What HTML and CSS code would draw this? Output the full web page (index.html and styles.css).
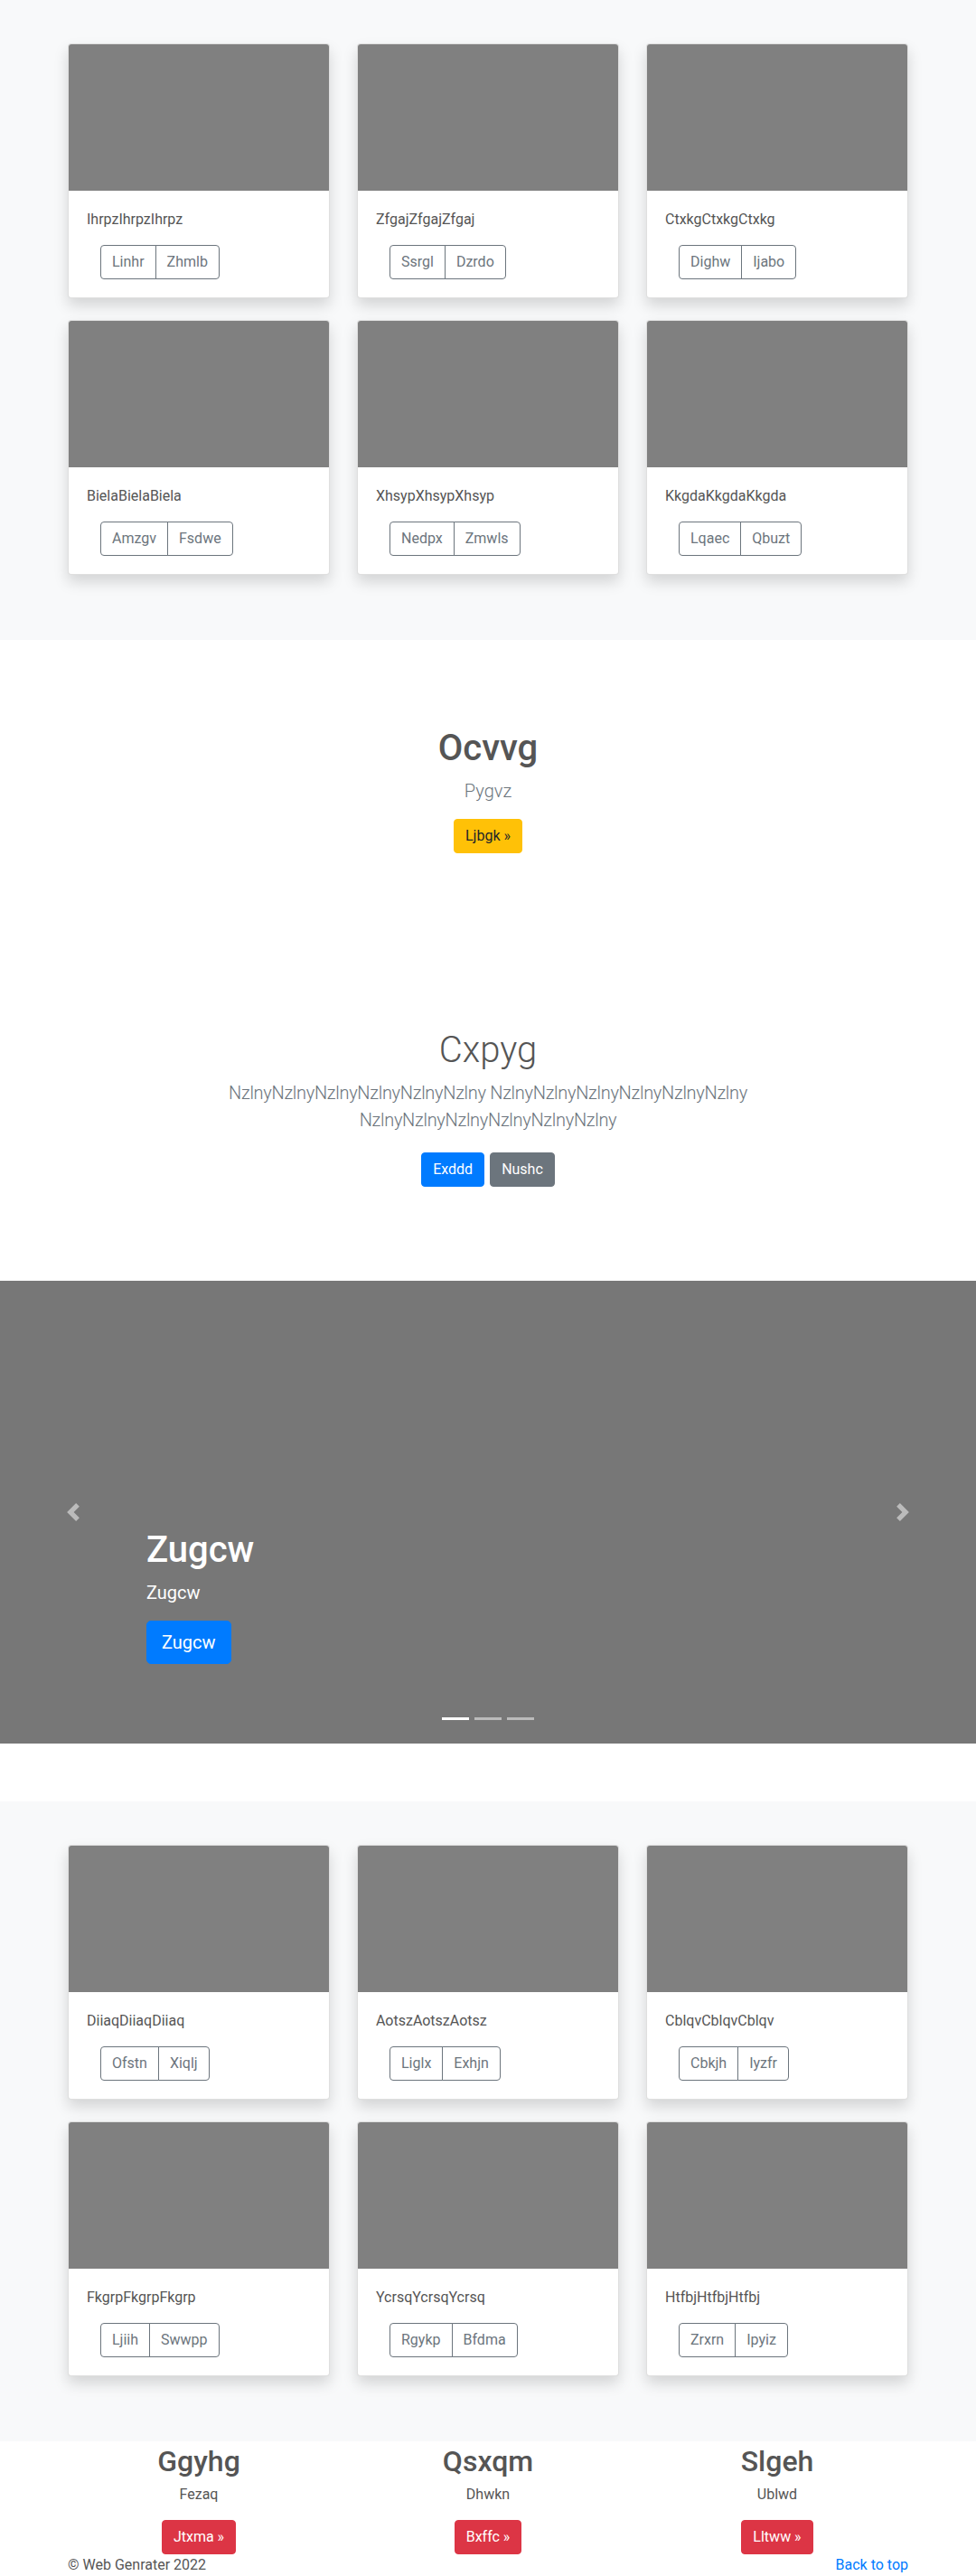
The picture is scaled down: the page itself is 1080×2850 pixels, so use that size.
FILE: index.html
```html
<!DOCTYPE html>
<html lang="en">
<head>
<meta charset="utf-8">
<title>Web Genrater</title>
<link rel="stylesheet" href="styles.css">
</head>
<body>
<main>
  <section class="album">
    <div class="container">
      <div class="card-grid">
        <div class="card"><div class="card-img"></div><div class="card-body"><p class="card-text">IhrpzIhrpzIhrpz</p><div class="btn-group"><a class="btn btn-outline" href="#">Linhr</a><a class="btn btn-outline" href="#">Zhmlb</a></div></div></div>
        <div class="card"><div class="card-img"></div><div class="card-body"><p class="card-text">ZfgajZfgajZfgaj</p><div class="btn-group"><a class="btn btn-outline" href="#">Ssrgl</a><a class="btn btn-outline" href="#">Dzrdo</a></div></div></div>
        <div class="card"><div class="card-img"></div><div class="card-body"><p class="card-text">CtxkgCtxkgCtxkg</p><div class="btn-group"><a class="btn btn-outline" href="#">Dighw</a><a class="btn btn-outline" href="#">Ijabo</a></div></div></div>
        <div class="card"><div class="card-img"></div><div class="card-body"><p class="card-text">BielaBielaBiela</p><div class="btn-group"><a class="btn btn-outline" href="#">Amzgv</a><a class="btn btn-outline" href="#">Fsdwe</a></div></div></div>
        <div class="card"><div class="card-img"></div><div class="card-body"><p class="card-text">XhsypXhsypXhsyp</p><div class="btn-group"><a class="btn btn-outline" href="#">Nedpx</a><a class="btn btn-outline" href="#">Zmwls</a></div></div></div>
        <div class="card"><div class="card-img"></div><div class="card-body"><p class="card-text">KkgdaKkgdaKkgda</p><div class="btn-group"><a class="btn btn-outline" href="#">Lqaec</a><a class="btn btn-outline" href="#">Qbuzt</a></div></div></div>
      </div>
    </div>
  </section>

  <section class="hero hero-a">
    <div class="container">
      <h1 class="hero-title">Ocvvg</h1>
      <p class="lead">Pygvz</p>
      <div class="btn-row"><a class="btn btn-warning" href="#">Ljbgk »</a></div>
    </div>
  </section>

  <section class="hero hero-b">
    <div class="container">
      <h1 class="hero-title light">Cxpyg</h1>
      <p class="lead lead-wide">NzlnyNzlnyNzlnyNzlnyNzlnyNzlny NzlnyNzlnyNzlnyNzlnyNzlnyNzlny NzlnyNzlnyNzlnyNzlnyNzlnyNzlny</p>
      <div class="btn-row btn-pair"><a class="btn btn-primary" href="#">Exddd</a><a class="btn btn-secondary" href="#">Nushc</a></div>
    </div>
  </section>

  <div class="carousel">
    <ol class="carousel-indicators">
      <li class="active"></li>
      <li></li>
      <li></li>
    </ol>
    <div class="carousel-caption">
      <h1 class="caption-title">Zugcw</h1>
      <p class="caption-text">Zugcw</p>
      <p class="caption-action"><a class="btn btn-lg btn-primary" href="#">Zugcw</a></p>
    </div>
    <a class="carousel-control prev" href="#" aria-label="Previous">
      <svg width="20" height="20" viewBox="0 0 8 8" fill="#fff"><path d="M5.25 0l-4 4 4 4 1.5-1.5L4.25 4l2.5-2.5L5.25 0z"/></svg>
    </a>
    <a class="carousel-control next" href="#" aria-label="Next">
      <svg width="20" height="20" viewBox="0 0 8 8" fill="#fff"><path d="M2.75 0l-1.5 1.5L3.75 4l-2.5 2.5L2.75 8l4-4-4-4z"/></svg>
    </a>
  </div>

  <section class="album">
    <div class="container">
      <div class="card-grid">
        <div class="card"><div class="card-img"></div><div class="card-body"><p class="card-text">DiiaqDiiaqDiiaq</p><div class="btn-group"><a class="btn btn-outline" href="#">Ofstn</a><a class="btn btn-outline" href="#">Xiqlj</a></div></div></div>
        <div class="card"><div class="card-img"></div><div class="card-body"><p class="card-text">AotszAotszAotsz</p><div class="btn-group"><a class="btn btn-outline" href="#">Liglx</a><a class="btn btn-outline" href="#">Exhjn</a></div></div></div>
        <div class="card"><div class="card-img"></div><div class="card-body"><p class="card-text">CblqvCblqvCblqv</p><div class="btn-group"><a class="btn btn-outline" href="#">Cbkjh</a><a class="btn btn-outline" href="#">Iyzfr</a></div></div></div>
        <div class="card"><div class="card-img"></div><div class="card-body"><p class="card-text">FkgrpFkgrpFkgrp</p><div class="btn-group"><a class="btn btn-outline" href="#">Ljiih</a><a class="btn btn-outline" href="#">Swwpp</a></div></div></div>
        <div class="card"><div class="card-img"></div><div class="card-body"><p class="card-text">YcrsqYcrsqYcrsq</p><div class="btn-group"><a class="btn btn-outline" href="#">Rgykp</a><a class="btn btn-outline" href="#">Bfdma</a></div></div></div>
        <div class="card"><div class="card-img"></div><div class="card-body"><p class="card-text">HtfbjHtfbjHtfbj</p><div class="btn-group"><a class="btn btn-outline" href="#">Zrxrn</a><a class="btn btn-outline" href="#">Ipyiz</a></div></div></div>
      </div>
    </div>
  </section>

  <section class="marketing">
    <div class="container marketing-grid">
      <div class="feature">
        <h2 class="feature-title">Ggyhg</h2>
        <p class="feature-text">Fezaq</p>
        <p class="feature-action"><a class="btn btn-danger" href="#">Jtxma »</a></p>
      </div>
      <div class="feature">
        <h2 class="feature-title">Qsxqm</h2>
        <p class="feature-text">Dhwkn</p>
        <p class="feature-action"><a class="btn btn-danger" href="#">Bxffc »</a></p>
      </div>
      <div class="feature">
        <h2 class="feature-title">Slgeh</h2>
        <p class="feature-text">Ublwd</p>
        <p class="feature-action"><a class="btn btn-danger" href="#">Lltww »</a></p>
      </div>
    </div>
  </section>
</main>

<footer class="container footer">
  <p>© Web Genrater 2022</p>
  <p><a class="link" href="#">Back to top</a></p>
</footer>
</body>
</html>
```

FILE: styles.css
```css
* {
  box-sizing: border-box;
}

body {
  margin: 0;
  font-family: Roboto, "Liberation Sans", Arial, sans-serif;
  font-size: 16px;
  line-height: 1.5;
  color: #555;
  background: #fff;
}

h1, h2, p, ol {
  margin: 0;
}

.container {
  width: 960px;
  margin: 0 auto;
  padding: 0 15px;
}

/* ---------- album / cards ---------- */
.album {
  background: #f8f9fa;
  padding: 48px 0 72px;
}

.card-grid {
  display: grid;
  grid-template-columns: repeat(3, 1fr);
  column-gap: 30px;
  row-gap: 24px;
}

.card {
  background: #fff;
  border: 1px solid rgba(0, 0, 0, 0.125);
  border-radius: 4px;
  box-shadow: 0 8px 16px rgba(0, 0, 0, 0.15);
  overflow: hidden;
}

.card-img {
  height: 162px;
  background: #808080;
}

.card-body {
  padding: 20px;
}

.card-text {
  margin-bottom: 16px;
}

.btn-group {
  display: inline-flex;
  margin-left: 15px;
}

/* ---------- buttons ---------- */
.btn {
  display: inline-block;
  font-size: 16px;
  line-height: 24px;
  padding: 6px 12px;
  border: 1px solid transparent;
  border-radius: 4px;
  text-decoration: none;
  font-weight: 400;
  text-align: center;
}

.btn-outline {
  color: #6c757d;
  border-color: #6c757d;
  background: transparent;
}

.btn-group .btn:first-child {
  border-top-right-radius: 0;
  border-bottom-right-radius: 0;
}

.btn-group .btn + .btn {
  margin-left: -1px;
  border-top-left-radius: 0;
  border-bottom-left-radius: 0;
}

.btn-warning {
  background: #ffc107;
  border-color: #ffc107;
  color: #212529;
}

.btn-primary {
  background: #007bff;
  border-color: #007bff;
  color: #fff;
}

.btn-secondary {
  background: #6c757d;
  border-color: #6c757d;
  color: #fff;
}

.btn-danger {
  background: #dc3545;
  border-color: #dc3545;
  color: #fff;
}

.btn-lg {
  font-size: 20px;
  line-height: 30px;
  padding: 8px 16px;
  border-radius: 5px;
}

/* ---------- hero sections ---------- */
.hero {
  text-align: center;
  background: #fff;
}

.hero-a {
  padding: 96px 0 97px;
}

.hero-b {
  padding: 97px 0 104px;
}

.hero-title {
  font-size: 40px;
  line-height: 48px;
  font-weight: 500;
  margin-bottom: 8px;
}

.hero-title.light {
  font-weight: 300;
}

.lead {
  font-size: 20px;
  line-height: 30px;
  font-weight: 300;
  color: #6c757d;
  margin-bottom: 16px;
}

.lead-wide {
  max-width: 610px;
  margin: 0 auto;
  letter-spacing: -0.3px;
}

.btn-row {
  display: flex;
  justify-content: center;
}

.btn-pair {
  margin-top: 21px;
  gap: 6px;
}

/* ---------- carousel ---------- */
.carousel {
  position: relative;
  height: 512px;
  background: #777;
  margin-bottom: 64px;
  overflow: hidden;
}

.carousel-caption {
  position: absolute;
  left: 15%;
  right: 15%;
  bottom: 52px;
  padding: 20px 0;
  color: #fff;
  text-align: left;
  z-index: 2;
}

.caption-title {
  font-size: 40px;
  line-height: 48px;
  font-weight: 500;
  margin-bottom: 8px;
}

.caption-text {
  font-size: 20px;
  line-height: 30px;
  margin-bottom: 16px;
}

.caption-action {
  margin-bottom: 16px;
}

.carousel-control {
  position: absolute;
  top: 0;
  bottom: 0;
  width: 15%;
  display: flex;
  align-items: center;
  justify-content: center;
  opacity: 0.5;
  z-index: 1;
}

.carousel-control.prev {
  left: 0;
}

.carousel-control.next {
  right: 0;
}

.carousel-indicators {
  position: absolute;
  left: 0;
  right: 0;
  bottom: 26px;
  display: flex;
  justify-content: center;
  gap: 6px;
  padding: 0;
  list-style: none;
  z-index: 3;
}

.carousel-indicators li {
  width: 30px;
  height: 3px;
  background: #fff;
  opacity: 0.5;
}

.carousel-indicators li.active {
  opacity: 1;
}

/* ---------- marketing ---------- */
.marketing {
  padding-top: 3px;
}

.marketing-grid {
  display: grid;
  grid-template-columns: repeat(3, 1fr);
  column-gap: 30px;
  text-align: center;
}

.feature-title {
  font-size: 32px;
  line-height: 1.2;
  font-weight: 500;
  margin-bottom: 6px;
}

.feature-text {
  margin-bottom: 16px;
}

/* ---------- footer ---------- */
.footer {
  display: flex;
  justify-content: space-between;
}

.link {
  color: #007bff;
  text-decoration: none;
}
```
